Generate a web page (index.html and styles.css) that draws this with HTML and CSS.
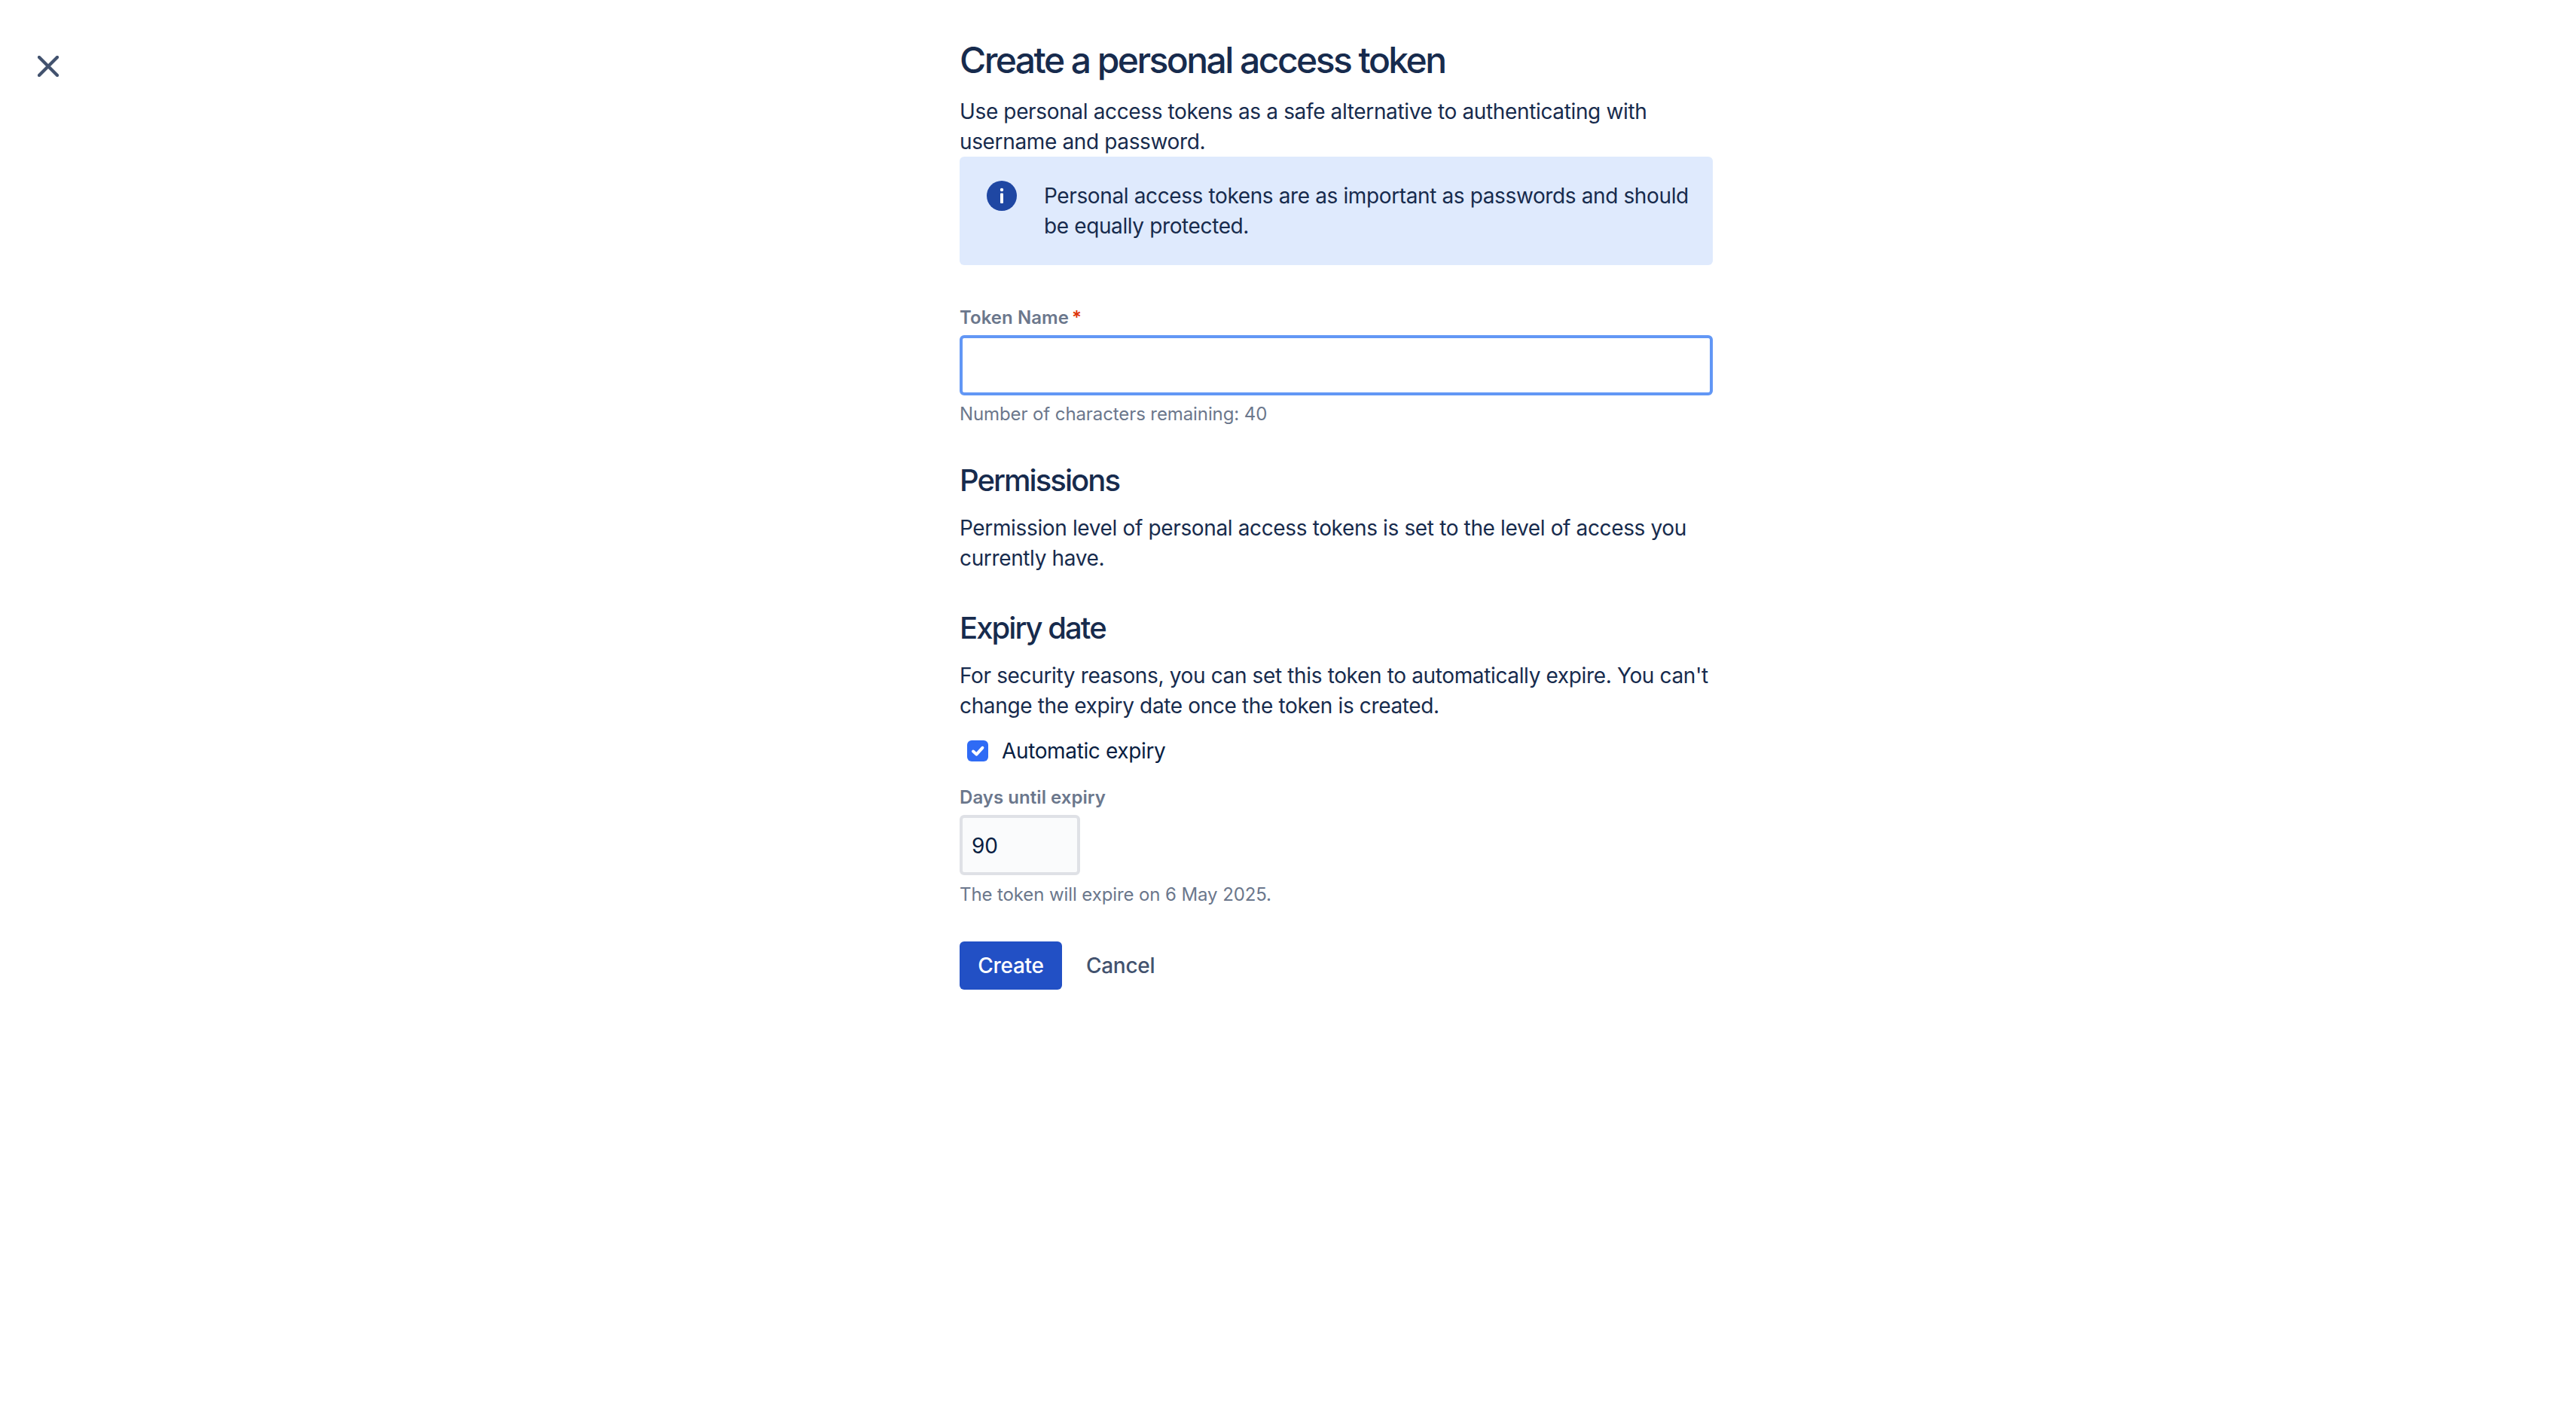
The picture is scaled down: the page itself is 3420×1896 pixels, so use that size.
FILE: index.html
```html
<!DOCTYPE html>
<html lang="en">
<head>
<meta charset="utf-8">
<title>Create a personal access token</title>
<link rel="stylesheet" href="styles.css">
</head>
<body>
<div class="page">
  <div class="close-col">
    <button class="close" type="button" aria-label="Close">
      <svg viewBox="0 0 28 28" width="28" height="28"><path d="M2 2 L26 26 M26 2 L2 26" fill="none" stroke="#42526e" stroke-width="4.3" stroke-linecap="round"/></svg>
    </button>
  </div>
  <main class="form">
    <h1 class="title">Create a personal access token</h1>
    <p class="text intro">Use personal access tokens as a safe alternative to authenticating with username and password.</p>
    <div class="banner">
      <svg class="banner-icon" viewBox="0 0 40 40" width="40" height="40"><circle cx="20" cy="20" r="20" fill="#1f47a3"/><circle cx="20" cy="12" r="2.2" fill="#fff"/><rect x="18" y="16.5" width="4" height="13.5" rx="1" fill="#fff"/></svg>
      <p class="banner-text">Personal access tokens are as important as passwords and should be equally protected.</p>
    </div>
    <label class="label label-token">Token Name<span class="req">*</span></label>
    <input class="input-token" type="text">
    <p class="help help-token">Number of characters remaining: 40</p>
    <h2 class="heading heading-perm">Permissions</h2>
    <p class="text para">Permission level of personal access tokens is set to the level of access you currently have.</p>
    <h2 class="heading heading-exp">Expiry date</h2>
    <p class="text para">For security reasons, you can set this token to automatically expire. You can't change the expiry date once the token is created.</p>
    <div class="check-row">
      <span class="check">
        <svg viewBox="0 0 28 28" width="28" height="28"><path d="M8 14.5 L12.4 18.6 L20.4 9.8" fill="none" stroke="#fff" stroke-width="4" stroke-linecap="round" stroke-linejoin="round"/></svg>
      </span>
      <span class="check-label">Automatic expiry</span>
    </div>
    <label class="label label-days">Days until expiry</label>
    <input class="input-days" type="text" value="90">
    <p class="help help-days">The token will expire on 6 May 2025.</p>
    <div class="actions">
      <button class="btn btn-primary" type="button">Create</button>
      <button class="btn btn-link" type="button">Cancel</button>
    </div>
  </main>
</div>
</body>
</html>
```

FILE: styles.css
```css
* { box-sizing: border-box; }
html, body { margin: 0; padding: 0; background: #fff; }
body { font-family: Inter, "Liberation Sans", sans-serif; color: #172b4d; min-height: 1896px; }
.page { display: flex; align-items: flex-start; }
.close-col { width: 1274px; padding: 74px 0 0 50px; flex: none; }
.close { display: block; width: 28px; height: 28px; padding: 0; border: 0; background: none; }
.close svg { display: block; }
.form { width: 1000px; flex: none; padding-top: 52px; }
.title { margin: 0 0 20px; font-size: 48px; line-height: 56px; font-weight: 550; letter-spacing: -2.55px; }
.text { margin: 0; font-size: 28px; line-height: 40px; font-weight: 400; letter-spacing: -0.36px; }
.banner { display: flex; margin: 0; padding: 32px 24px 32px 36px; background: #dfeafd; border-radius: 6px; height: 144px; gap: 36px; }
.banner-icon { flex: none; display: block; }
.banner-text { margin: 0; font-size: 28px; line-height: 40px; letter-spacing: -0.38px; }
.label { display: block; font-size: 24px; line-height: 32px; font-weight: 600; color: #6b778c; letter-spacing: 0.05px; }
.label-token { margin-top: 54px; margin-bottom: 7px; }
.req { color: #de350b; margin-left: 4px; }
.input-token { display: block; width: 1000px; height: 80px; border: 4px solid #6297f5; border-radius: 6px; background: #fff; outline: none; }
.help { margin: 0; font-size: 24px; line-height: 32px; color: #6b778c; letter-spacing: -0.1px; }
.help-token { margin-top: 9px; }
.heading { margin: 0; font-size: 40px; line-height: 48px; font-weight: 550; letter-spacing: -1.95px; }
.heading-perm { margin-top: 48px; margin-bottom: 19px; }
.heading-exp { margin-top: 49px; margin-bottom: 19px; }
.check-row { display: flex; align-items: center; height: 40px; margin-top: 20px; padding-left: 10px; gap: 18px; }
.check { display: block; width: 28px; height: 28px; border-radius: 6px; background: #2f6bf5; flex: none; }
.check svg { display: block; }
.check-label { font-size: 28px; line-height: 40px; color: #091e42; letter-spacing: -0.36px; }
.label-days { margin-top: 26px; margin-bottom: 7px; }
.input-days { display: block; width: 160px; height: 80px; padding: 2px 12px 0; border: 4px solid #dfe1e6; border-radius: 6px; background: #fafbfc; font-family: Inter, sans-serif; font-size: 28px; color: #091e42; outline: none; }
.help-days { margin-top: 10px; }
.actions { display: flex; margin-top: 46px; gap: 8px; }
.btn { height: 64px; padding: 0 24px; border: 0; border-radius: 6px; font-family: Inter, sans-serif; font-size: 28px; font-weight: 500; letter-spacing: -0.3px; }
.btn-primary { background: #2250c5; color: #fff; width: 136px; }
.btn-link { background: transparent; color: #42526e; }
```
